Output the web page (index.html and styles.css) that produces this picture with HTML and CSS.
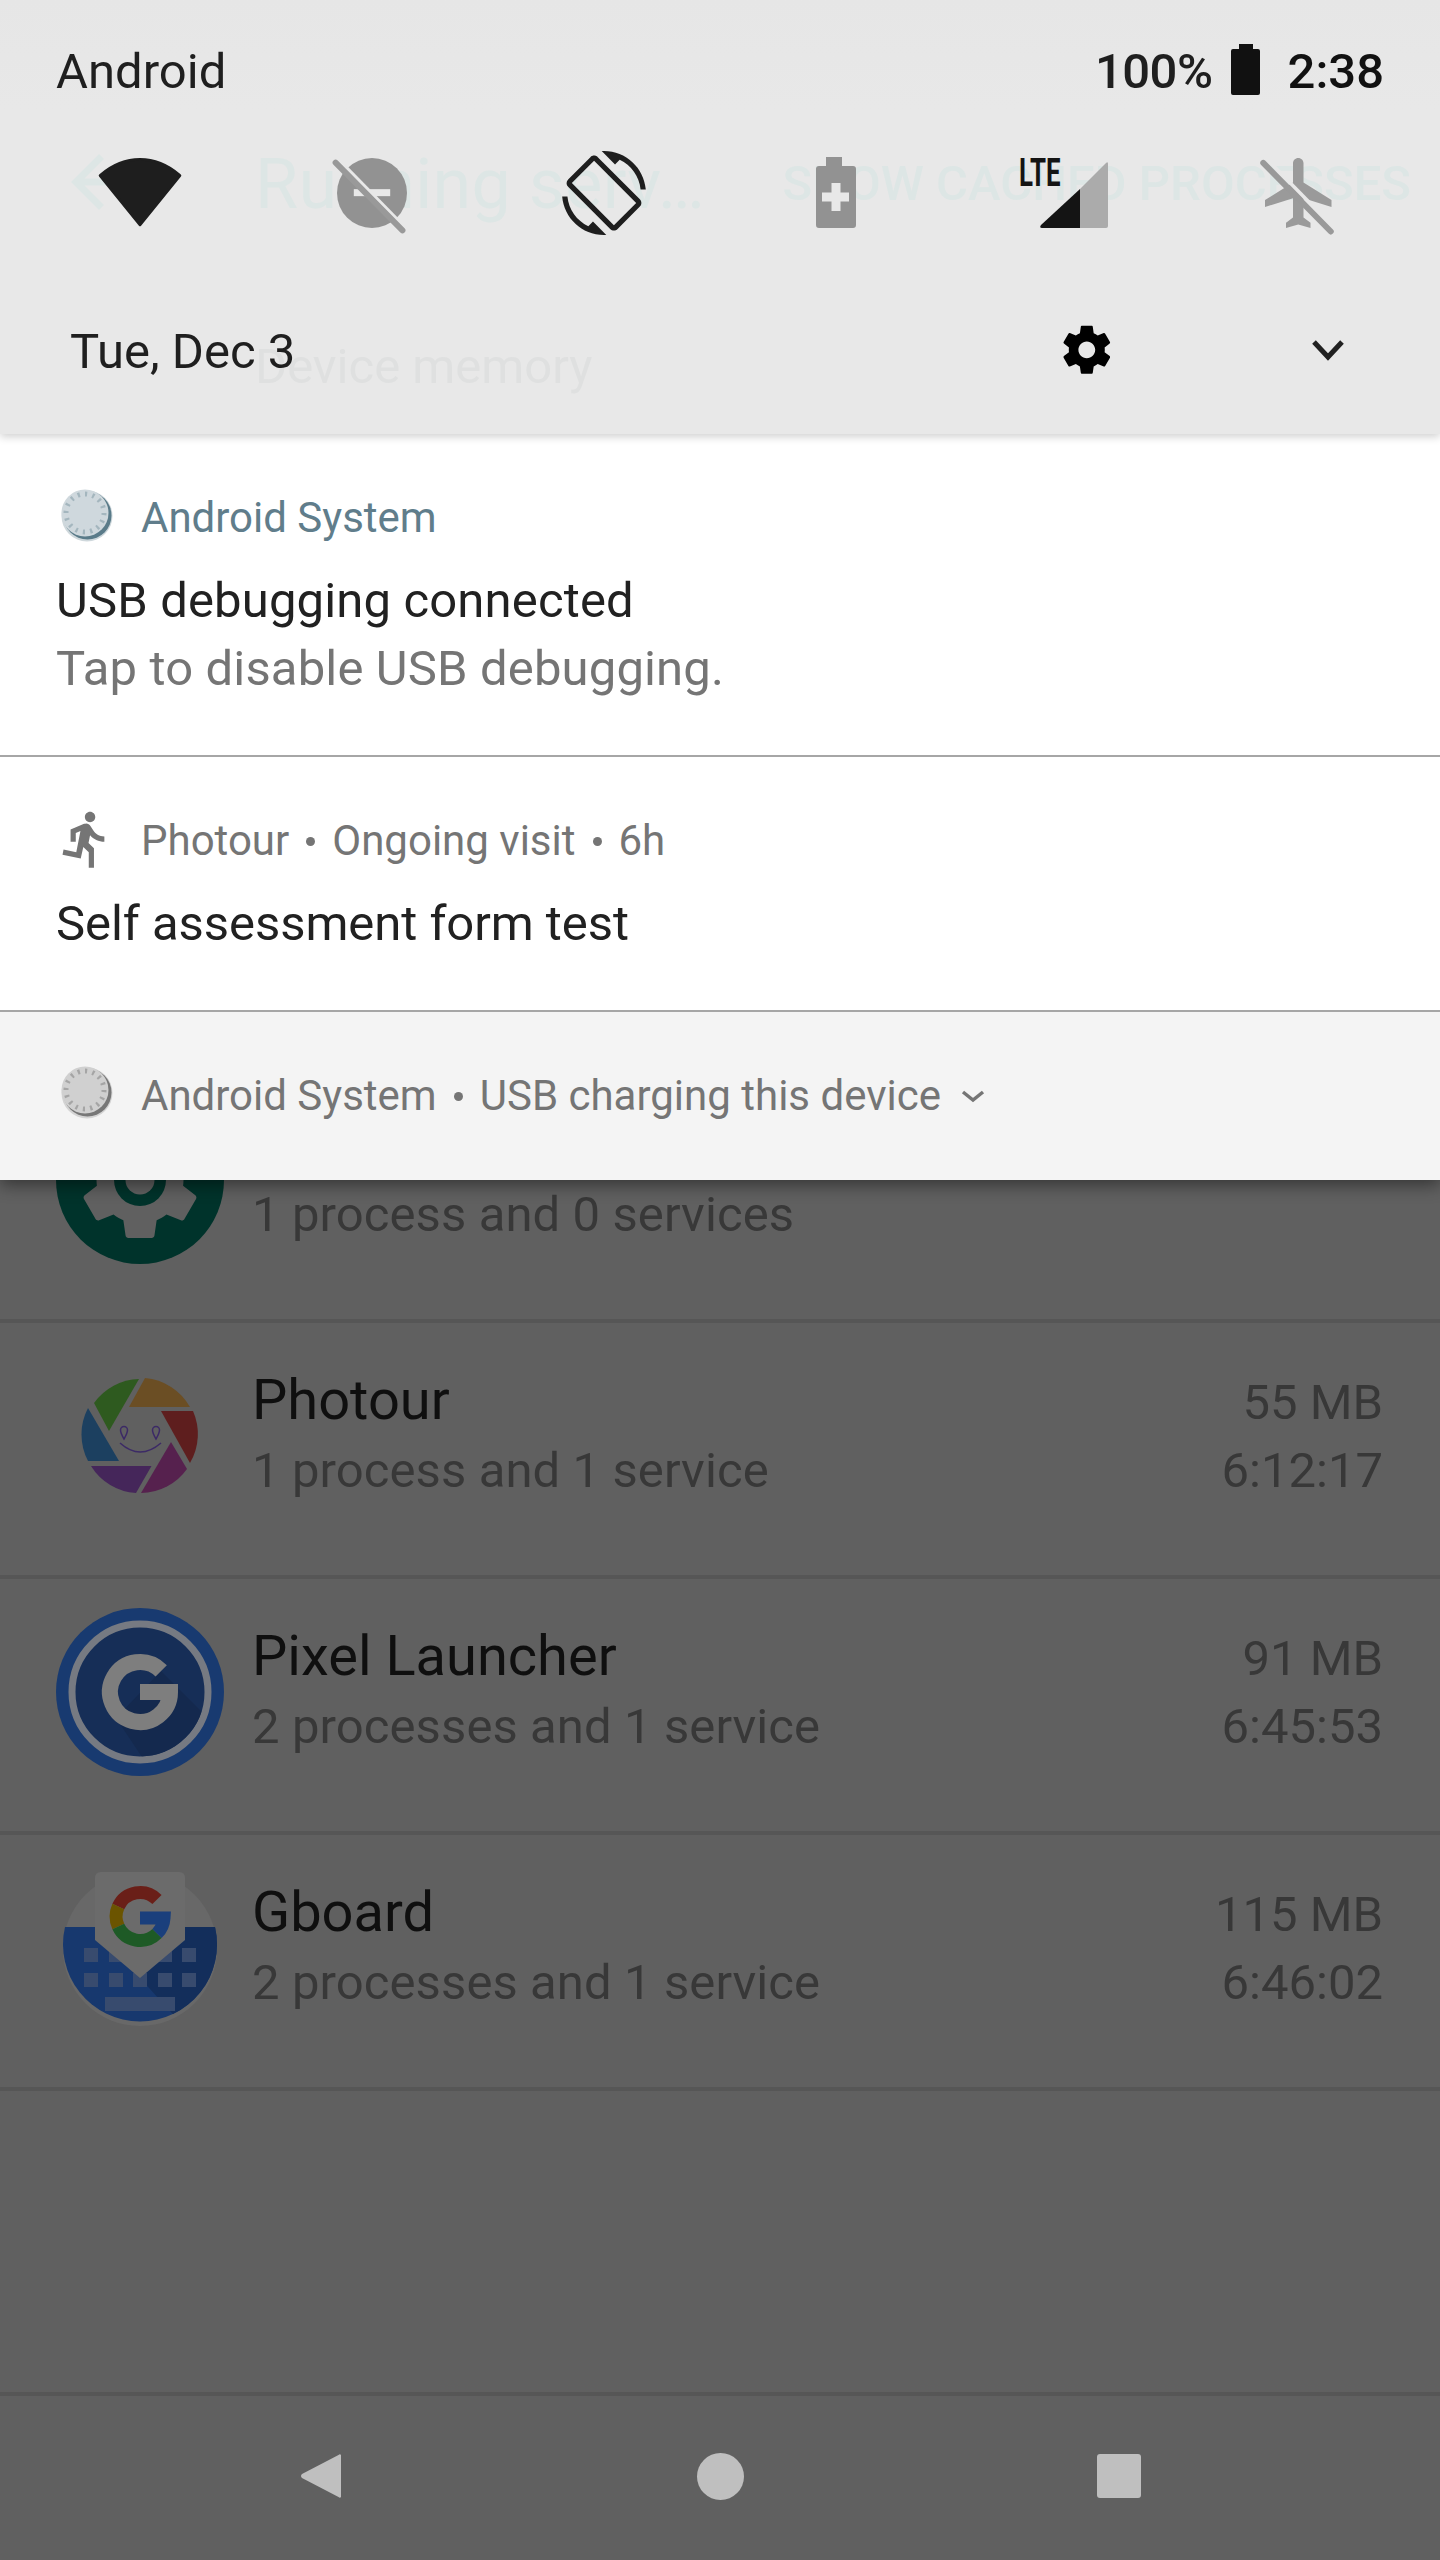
FILE: index.html
```html
<!DOCTYPE html>
<html lang="en">
<head>
<meta charset="utf-8">
<title>Running services</title>
<link rel="stylesheet" href="styles.css">
</head>
<body>
<div class="screen">
  <main class="app">
    <div class="app-top">
      <div class="toolbar">
        <svg class="ghost-arrow" viewBox="0 0 24 24"><path d="M20 11H7.83l5.59-5.59L12 4l-8 8 8 8 1.41-1.41L7.83 13H20v-2z"/></svg>
        <div class="ghost-title">Running serv…</div>
        <div class="ghost-action">SHOW CACHED PROCESSES</div>
      </div>
      <div class="ghost-section">Device memory</div>
    </div>
    <section class="rows">
      <div class="row">
        <svg class="app-icon" viewBox="0 0 168 168">
          <circle cx="84" cy="84" r="84" fill="#00332b"/>
          <g transform="translate(14.4 14.4) scale(5.8)"><path fill="#606060" d="M19.43 12.98c.04-.32.07-.64.07-.98s-.03-.66-.07-.98l2.11-1.65c.19-.15.24-.42.12-.64l-2-3.46c-.12-.22-.39-.3-.61-.22l-2.49 1c-.52-.4-1.08-.73-1.69-.98l-.38-2.65C14.46 2.18 14.25 2 14 2h-4c-.25 0-.46.18-.49.42l-.38 2.65c-.61.25-1.17.59-1.69.98l-2.49-1c-.23-.09-.49 0-.61.22l-2 3.46c-.13.22-.07.49.12.64l2.11 1.65c-.04.32-.07.65-.07.98s.03.66.07.98l-2.11 1.65c-.19.15-.24.42-.12.64l2 3.46c.12.22.39.3.61.22l2.49-1c.52.4 1.08.73 1.69.98l.38 2.65c.03.24.24.42.49.42h4c.25 0 .46-.18.49-.42l.38-2.65c.61-.25 1.17-.59 1.69-.98l2.49 1c.23.09.49 0 .61-.22l2-3.46c.12-.22.07-.49-.12-.64l-2.11-1.65z"/></g>
          <circle cx="84" cy="84" r="26" fill="#00332b"/>
          <circle cx="84" cy="84" r="14.5" fill="#606060"/>
        </svg>
        <div class="row-text">
          <div class="row-title">&nbsp;</div>
          <div class="row-sub">1 process and 0 services</div>
        </div>
      </div>
      <div class="row">
        <svg class="app-icon" viewBox="0 0 168 168">
          <g transform="translate(84 84)">
            <path fill="#2e5a1f" d="M-46-33A57 57 0 0 1-1-57L-31-5Z"/>
            <path fill="#6b4e24" d="M5-58A57 57 0 0 1 50-29H-11Z"/>
            <path fill="#5e1e1e" d="M21-25H53A57 57 0 0 1 50 27Z"/>
            <path fill="#56214e" d="M31 6L47 33A57 57 0 0 1 1 57Z"/>
            <path fill="#45265a" d="M-49 30H11.500L-4 57A57 57 0 0 1-49 30Z"/>
            <path fill="#1c4060" d="M-52-28L-21 25H-52A57 57 0 0 1-52-28Z"/>
            <g fill="none" stroke="#3c2a66" stroke-width="1.500">
              <path d="M-20 7Q0 25 21 7"/>
              <path d="M-16 3Q-19.500-3-19.500-6A3.500 3.500 0 0 1-12.500-6Q-12.500-3-16 3Z"/>
              <path d="M16 3Q12.500-3 12.500-6A3.500 3.500 0 0 1 19.500-6Q19.500-3 16 3Z"/>
            </g>
          </g>
        </svg>
        <div class="row-text">
          <div class="row-title">Photour</div>
          <div class="row-sub">1 process and 1 service</div>
        </div>
        <div class="row-meta"><div>55 MB</div><div>6:12:17</div></div>
      </div>
      <div class="row">
        <svg class="app-icon" viewBox="0 0 168 168">
          <defs><clipPath id="pl-inner"><circle cx="84" cy="84" r="64.500"/></clipPath></defs>
          <circle cx="84" cy="84" r="84" fill="#183a70"/>
          <circle cx="84" cy="84" r="68" fill="#162e57" stroke="#767a82" stroke-width="7"/>
          <path clip-path="url(#pl-inner)" d="M105 63L170 128V170H100L60 110Z" fill="#14294e"/>
          <path d="M105.200 62.800A30 30 0 1 0 114 84H84" fill="none" stroke="#7e7e7e" stroke-width="16"/>
        </svg>
        <div class="row-text">
          <div class="row-title">Pixel Launcher</div>
          <div class="row-sub">2 processes and 1 service</div>
        </div>
        <div class="row-meta"><div>91 MB</div><div>6:45:53</div></div>
      </div>
      <div class="row">
        <svg class="app-icon" viewBox="0 0 168 168">
          <defs><clipPath id="gb-low"><path d="M9 63H159A77 77 0 1 1 9 63Z"/></clipPath></defs>
          <circle cx="84" cy="85" r="77" fill="#686868"/>
          <path d="M9 63H159A77 77 0 1 1 9 63Z" fill="#17386e"/>
          <path clip-path="url(#gb-low)" d="M84 114L129 76V63H170V170H135Z" fill="#132e5b"/>
          <g fill="#384b6e">
            <rect x="28" y="84" width="14" height="14"/><rect x="53" y="84" width="14" height="14"/><rect x="102" y="84" width="14" height="14"/><rect x="126" y="84" width="14" height="14"/>
            <rect x="28" y="109" width="14" height="14"/><rect x="53" y="109" width="14" height="14"/><rect x="77" y="109" width="14" height="14"/><rect x="102" y="109" width="14" height="14"/><rect x="126" y="109" width="14" height="14"/>
            <rect x="49" y="133" width="70" height="14"/>
          </g>
          <path d="M39 14Q39 8 45 8H123Q129 8 129 14V76L84 114 39 76Z" fill="#6b6b6b"/>
          <g fill="none" stroke-width="13">
            <path stroke="#6a1f18" d="M101 35.500A24 24 0 0 0 62.300 42.500"/>
            <path stroke="#6b5400" d="M62.300 42.500A24 24 0 0 0 62.300 62.500"/>
            <path stroke="#1e5a26" d="M62.300 62.500A24 24 0 0 0 101 69.500"/>
            <path stroke="#1a3f7c" d="M101 69.500A24 24 0 0 0 108 54H84"/>
          </g>
        </svg>
        <div class="row-text">
          <div class="row-title">Gboard</div>
          <div class="row-sub">2 processes and 1 service</div>
        </div>
        <div class="row-meta"><div>115 MB</div><div>6:46:02</div></div>
      </div>
    </section>
    <nav class="navbar">
      <div class="nav-btn">
        <svg class="nav-back" viewBox="0 0 40 46"><path d="M37.500 2Q39 .5 40 2V44Q39 45.500 37.500 44L1 25Q-1 23 1 21Z"/></svg>
      </div>
      <div class="nav-btn"><div class="nav-home"></div></div>
      <div class="nav-btn"><div class="nav-recent"></div></div>
    </nav>
  </main>

  <aside class="shade">
    <div class="qs">
      <div class="status">
        <div class="carrier">Android</div>
        <div class="status-right">
          <span class="pct">100%</span>
          <svg class="batt" viewBox="0 0 29 51"><path d="M8 0H22V5H27Q29 5 29 7V49Q29 51 27 51H2Q0 51 0 49V7Q0 5 2 5H8Z"/></svg>
          <span class="clock">2:38</span>
        </div>
      </div>
      <div class="tiles">
        <svg class="tile" viewBox="0 0 24 24"><path class="ic-wifi" d="M12 21.100L23.400 7C22.900 6.600 18.500 2.400 12 2.400S1.100 6.600.6 7Z"/></svg>
        <svg class="tile" viewBox="0 0 24 24">
          <circle class="ic-grey" cx="12" cy="12" r="10"/>
          <rect class="ic-cut" x="6.800" y="10.900" width="10.400" height="2"/>
          <path class="ic-cutline" d="M2.400 2.400L21.500 21.900"/>
          <path class="ic-slash" d="M1.600 3.300L20.700 22.700"/>
        </svg>
        <svg class="tile" viewBox="0 0 24 24"><path class="ic-dark" d="M16.480 2.520c3.270 1.550 5.610 4.720 5.970 8.480h1.500C23.440 4.840 18.290 0 12 0l-.66.03 3.810 3.810 1.330-1.320zm-6.250-.77c-.59-.59-1.540-.59-2.120 0L1.750 8.110c-.59.59-.59 1.540 0 2.120l12.020 12.020c.59.59 1.540.59 2.120 0l6.360-6.360c.59-.59.59-1.540 0-2.120L10.230 1.750zm4.600 19.440L2.810 9.170l6.360-6.360 12.020 12.020-6.360 6.360zm-7.310.29C4.250 19.940 1.910 16.760 1.550 13H.05C.56 19.160 5.710 24 12 24l.66-.03-3.810-3.810-1.330 1.320z"/></svg>
        <svg class="tile" viewBox="0 0 84 84">
          <path class="ic-grey" d="M32 6H48V15H59Q62 15 62 18V74Q62 77 59 77H25Q22 77 22 74V18Q22 15 25 15H32Z"/>
          <path class="ic-cut" d="M37.500 32H46.500V41.500H55V50.500H46.500V60H37.500V50.500H28V41.500H37.500Z"/>
        </svg>
        <div class="tile-signal">
          <svg class="tile" viewBox="0 0 84 84">
            <path class="ic-light" d="M54 38L80 12Q82 10 82 13V75Q82 77 80 77H54Z"/>
            <path class="ic-black" d="M54 38V77H16Q13 77 15 74Z"/>
          </svg>
          <span class="lte">LTE</span>
        </div>
        <svg class="tile" viewBox="0 0 24 24">
          <path class="ic-grey-plane" d="M21 16v-2l-8-5V3.500c0-.83-.67-1.500-1.500-1.500S10 2.670 10 3.500V9l-8 5v2l8-2.500V19l-2 1.500V22l3.500-1 3.500 1v-1.500L13 19v-5.500l8 2.500z"/>
          <path class="ic-cutline" d="M2.700 2.500L21.600 21.800"/>
          <path class="ic-slash" d="M1.500 3.400L20.800 23"/>
        </svg>
      </div>
      <div class="qs-foot">
        <div class="date">Tue, Dec 3</div>
        <svg class="gear" viewBox="0 0 24 24"><path fill-rule="evenodd" d="M19.430 12.980c.04-.32.07-.64.07-.98s-.03-.66-.07-.98l2.110-1.650c.19-.15.24-.42.12-.64l-2-3.460c-.12-.22-.39-.3-.61-.22l-2.490 1c-.52-.4-1.080-.73-1.690-.98l-.38-2.650C14.460 2.180 14.250 2 14 2h-4c-.25 0-.46.18-.49.42l-.38 2.650c-.61.25-1.170.59-1.690.98l-2.490-1c-.23-.09-.49 0-.61.22l-2 3.460c-.13.22-.07.49.12.64l2.110 1.650c-.04.32-.07.65-.07.98s.03.66.07.98l-2.110 1.650c-.19.15-.24.42-.12.64l2 3.460c.12.22.39.3.61.22l2.490-1c.52.4 1.080.73 1.690.98l.38 2.650c.03.24.24.42.49.42h4c.25 0 .46-.18.49-.42l.38-2.650c.61-.25 1.170-.59 1.690-.98l2.490 1c.23.09.49 0 .61-.22l2-3.460c.12-.22.07-.49-.12-.64l-2.110-1.650zM12 15.500c-1.930 0-3.500-1.570-3.500-3.500s1.570-3.500 3.500-3.500 3.500 1.570 3.500 3.500-1.570 3.500-3.500 3.500z"/></svg>
        <svg class="expand" viewBox="0 0 34 22"><path d="M3 3L17 18 31 3"/></svg>
      </div>
    </div>

    <article class="card card-first">
      <header class="n-head n-accent">
        <svg class="dial dial-blue" viewBox="0 0 56 56">
          <circle class="d-halo" cx="28" cy="29" r="25.500"/>
          <circle class="d-cres" cx="28.500" cy="28.500" r="24"/>
          <circle class="d-disc" cx="26" cy="26" r="23.500"/>
          <circle class="d-tick" cx="26" cy="26" r="19" pathLength="16"/>
        </svg>
        <span>Android System</span>
      </header>
      <div class="n-title">USB debugging connected</div>
      <div class="n-body">Tap to disable USB debugging.</div>
    </article>

    <article class="card card-second">
      <header class="n-head">
        <svg class="runner" viewBox="0 0 24 24"><path d="M13.490 5.480c1.100 0 2-.9 2-2s-.9-2-2-2-2 .9-2 2 .9 2 2 2zm-3.600 13.900l1-4.400 2.100 2v6h2v-7.500l-2.100-2 .6-3c1.300 1.500 3.300 2.500 5.500 2.500v-2c-1.900 0-3.500-1-4.300-2.400l-1-1.600c-.4-.6-1-1-1.700-1-.3 0-.5.100-.8.100l-5.200 2.200v4.700h2v-3.400l1.800-.7-1.600 8.100-4.900-1-.4 2 7 1.400z"/></svg>
        <span>Photour</span><i class="dot"></i><span>Ongoing visit</span><i class="dot"></i><span>6h</span>
      </header>
      <div class="n-title n-title-tight">Self assessment form test</div>
    </article>

    <article class="card card-third">
      <header class="n-head">
        <svg class="dial dial-grey" viewBox="0 0 56 56">
          <circle class="d-halo" cx="28" cy="29" r="25.500"/>
          <circle class="d-cres" cx="28.500" cy="28.500" r="24"/>
          <circle class="d-disc" cx="26" cy="26" r="23.500"/>
          <circle class="d-tick" cx="26" cy="26" r="19" pathLength="16"/>
        </svg>
        <span>Android System</span><i class="dot"></i><span>USB charging this device</span>
        <svg class="mini-chev" viewBox="0 0 24 14"><path d="M2 3L12 11 22 3"/></svg>
      </header>
    </article>
  </aside>
</div>
</body>
</html>
```

FILE: styles.css
```css
* { box-sizing: border-box; }
html, body { margin: 0; padding: 0; }
body { font-family: Roboto, "Liberation Sans", sans-serif; }

.screen {
  position: relative;
  width: 1440px;
  height: 2560px;
  overflow: hidden;
  background: #606060;
}

/* ---------- dimmed app underneath ---------- */
.app { display: flex; flex-direction: column; height: 100%; }

.app-top {
  height: 1067px;
  background: linear-gradient(#e6e6e6, #e8e8e8 110px);
  background-size: 100% 434px;
  background-repeat: no-repeat;
}
.toolbar { display: flex; align-items: flex-start; padding: 140px 29px 0 57px; }
.ghost-arrow { width: 84px; height: 84px; fill: #dde6e5; flex: none; }
.ghost-title {
  margin: 3px 0 0 114px;
  font-size: 70px; line-height: 82px;
  letter-spacing: .3px;
  color: #dde6e5;
  white-space: nowrap;
}
.ghost-action {
  margin: 11px 0 0 auto;
  font-size: 49px; line-height: 66px; font-weight: 500;
  color: #dde6e5;
  white-space: nowrap;
}
.ghost-section {
  margin: 109px 0 0 255px;
  font-size: 49px; line-height: 66px;
  color: #dfe0e0;
}

.rows { display: flex; flex-direction: column; }
.row {
  display: flex;
  align-items: flex-start;
  height: 256px;
  padding: 29px 57px 0 56px;
  border-bottom: 4px solid #565656;
}
.app-icon { width: 168px; height: 168px; flex: none; }
.row-text { margin: 12px 0 0 28px; flex: 1; }
.row-title { font-size: 56px; line-height: 73px; color: #0f0f0f; }
.row-sub { font-size: 49px; line-height: 68px; letter-spacing: .1px; color: #383838; }
.row-meta {
  margin-top: 17px;
  font-size: 49px; line-height: 68px;
  color: #383838;
  text-align: right;
}

.navbar {
  display: flex;
  justify-content: center;
  align-items: center;
  margin-top: auto;
  height: 168px;
  padding-bottom: 4px;
  border-top: 4px solid #565656;
}
.nav-btn { width: 399px; display: flex; justify-content: center; align-items: center; }
.nav-back { width: 40px; height: 46px; fill: #bfbfbf; }
.nav-home { width: 47px; height: 47px; border-radius: 50%; background: #bfbfbf; }
.nav-recent { width: 44px; height: 44px; border-radius: 3px; background: #bfbfbf; }

/* ---------- notification shade, over the app ---------- */
.shade {
  position: absolute;
  top: 0; left: 0;
  width: 1440px;
  box-shadow: 0 5px 16px rgba(0, 0, 0, .45);
}

.qs {
  position: relative;
  height: 434px;
  box-shadow: 0 3px 8px rgba(0, 0, 0, .18);
}
.status {
  display: flex;
  justify-content: space-between;
  padding: 39px 56px 0 56px;
  height: 104px;
  font-size: 49px; line-height: 66px;
  color: #1f1f1f;
}
.status-right { display: flex; align-items: flex-start; }
.pct { font-weight: 500; letter-spacing: -.5px; }
.batt { width: 29px; height: 51px; margin: 5px 28px 0 18px; fill: #111; }
.clock { font-weight: 500; color: #111; }

.tiles { display: flex; gap: 148px; padding: 47px 0 0 98px; }
.tile { width: 84px; height: 84px; flex: none; display: block; }
.tile-signal { position: relative; width: 84px; height: 84px; flex: none; }
.lte {
  position: absolute;
  left: -7px; top: 3px;
  font-size: 38px; line-height: 38px; font-weight: 700;
  color: #141414;
  transform: scaleX(.68);
  transform-origin: left top;
}
.ic-wifi { fill: #1e1e1e; stroke: #1e1e1e; stroke-width: .8; stroke-linejoin: round; }
.ic-dark { fill: #1e1e1e; }
.ic-grey { fill: #929292; }
.ic-grey-plane { fill: #9a9a9a; }
.ic-light { fill: #ababab; }
.ic-black { fill: #141414; }
.ic-cut { fill: #e8e8e8; }
.ic-cutline { fill: none; stroke: #e8e8e8; stroke-width: 1; }
.ic-slash { fill: none; stroke: #999; stroke-width: 1.700; stroke-linecap: round; }

.qs-foot { display: flex; align-items: flex-start; padding: 84px 0 0 70px; position: relative; }
.date { font-size: 49px; line-height: 66px; color: #1f1f1f; flex: none; }
.gear { width: 57.600px; height: 57.600px; margin: 2px 0 0 763px; fill: #000; flex: none; }
.expand {
  width: 34px; height: 22px; margin: 20px 0 0 195px; flex: none;
  fill: none; stroke: #212121; stroke-width: 5;
}

.card { background: #fff; }
.card-first { height: 323px; padding-top: 56px; border-bottom: 2px solid #a6a6a6; }
.card-second { height: 255px; padding-top: 56px; border-bottom: 2px solid #a6a6a6; }
.card-third { height: 168px; padding-top: 56px; background: #f4f4f4; }

.n-head {
  display: flex;
  align-items: center;
  padding-left: 141px;
  position: relative;
  font-size: 42px; line-height: 56px;
  color: #757575;
  white-space: nowrap;
}
.n-accent { color: #607d8b; }
.n-title { margin-top: 21px; padding-left: 56px; font-size: 49px; line-height: 68px; letter-spacing: .15px; color: #212121; }
.n-title-tight { letter-spacing: -.05px; }
.n-body { padding-left: 56px; font-size: 49px; line-height: 68px; letter-spacing: .15px; color: #757575; }
.dot { width: 9px; height: 9px; border-radius: 50%; background: #757575; margin: 0 17px; flex: none; }

.dial, .runner { position: absolute; }
.dial { left: 59px; top: -3px; width: 56px; height: 56px; }
.dial-grey { top: -4px; }
.d-tick { fill: none; stroke-width: 5; stroke-dasharray: .3 .7; }
.dial-blue .d-halo { fill: #cfd8dc; }
.dial-blue .d-cres { fill: #5a7b89; }
.dial-blue .d-disc { fill: #cfd8dd; }
.dial-blue .d-tick { stroke: #a4b6be; }
.dial-grey .d-halo { fill: #d4d4d4; }
.dial-grey .d-cres { fill: #777; }
.dial-grey .d-disc { fill: #d0d0d0; }
.dial-grey .d-tick { stroke: #a5a5a5; }

.runner { left: 55px; top: -5px; width: 62.400px; height: 62.400px; fill: #757575; }
.mini-chev {
  width: 24px; height: 14px; margin-left: 20px;
  fill: none; stroke: #757575; stroke-width: 3.500;
}
```
